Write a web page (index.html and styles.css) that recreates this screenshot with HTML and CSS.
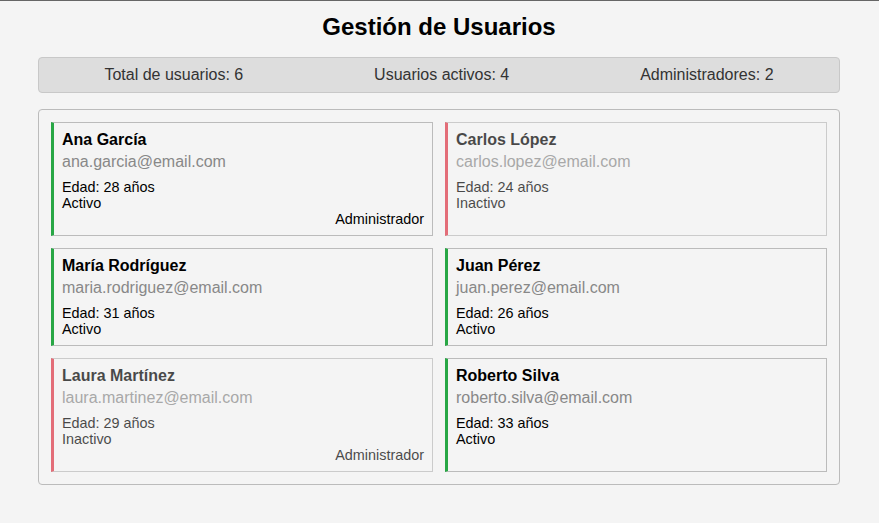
FILE: index.html
```html
<!DOCTYPE html>
<html lang="es">
<head>
<meta charset="utf-8">
<title>Gestión de Usuarios</title>
<link rel="stylesheet" href="styles.css">
</head>
<body>
<div class="app">
  <h1 class="title">Gestión de Usuarios</h1>
  <div class="stats">
    <div class="stat">Total de usuarios: 6</div>
    <div class="stat">Usuarios activos: 4</div>
    <div class="stat">Administradores: 2</div>
  </div>
  <div class="list">
    <div class="card active">
      <div class="name">Ana García</div>
      <div class="email">ana.garcia@email.com</div>
      <div class="info">Edad: 28 años</div>
      <div class="info">Activo</div>
      <div class="role">Administrador</div>
    </div>
    <div class="card inactive">
      <div class="name">Carlos López</div>
      <div class="email">carlos.lopez@email.com</div>
      <div class="info">Edad: 24 años</div>
      <div class="info">Inactivo</div>
    </div>
    <div class="card active">
      <div class="name">María Rodríguez</div>
      <div class="email">maria.rodriguez@email.com</div>
      <div class="info">Edad: 31 años</div>
      <div class="info">Activo</div>
    </div>
    <div class="card active">
      <div class="name">Juan Pérez</div>
      <div class="email">juan.perez@email.com</div>
      <div class="info">Edad: 26 años</div>
      <div class="info">Activo</div>
    </div>
    <div class="card inactive">
      <div class="name">Laura Martínez</div>
      <div class="email">laura.martinez@email.com</div>
      <div class="info">Edad: 29 años</div>
      <div class="info">Inactivo</div>
      <div class="role">Administrador</div>
    </div>
    <div class="card active">
      <div class="name">Roberto Silva</div>
      <div class="email">roberto.silva@email.com</div>
      <div class="info">Edad: 33 años</div>
      <div class="info">Activo</div>
    </div>
  </div>
</div>
</body>
</html>
```
FILE: styles.css
```css
html, body {
  margin: 0;
  background: #f4f4f4;
}
body {
  border-top: 1px solid #666;
  font-family: "Liberation Sans", Arial, sans-serif;
  color: #000;
}
.app {
  width: 802px;
  margin: 0 0 0 38px;
  padding: 12px 0;
}
.title {
  margin: 0 0 16px;
  font-size: 24px;
  font-weight: bold;
  text-align: center;
  color: #000;
}
.stats {
  display: flex;
  justify-content: space-around;
  background: #dddddd;
  border: 1px solid #c8c8c8;
  border-radius: 4px;
  padding: 8px 0;
  font-size: 16px;
  color: #333;
}
.list {
  margin-top: 16px;
  border: 1px solid #bbb;
  border-radius: 4px;
  padding: 12px;
  display: grid;
  grid-template-columns: 1fr 1fr;
  gap: 12px;
}
.card {
  border: 1px solid #bbb;
  border-left: 3px solid #28a745;
  padding: 8px;
}
.card.inactive {
  border-left-color: #dc3545;
  opacity: 0.7;
}
.name {
  font-size: 16px;
  font-weight: bold;
  margin-bottom: 4px;
}
.email {
  font-size: 16px;
  color: #888;
  margin-bottom: 8px;
}
.info {
  font-size: 14.4px;
}
.role {
  font-size: 14.4px;
  text-align: right;
}
```
